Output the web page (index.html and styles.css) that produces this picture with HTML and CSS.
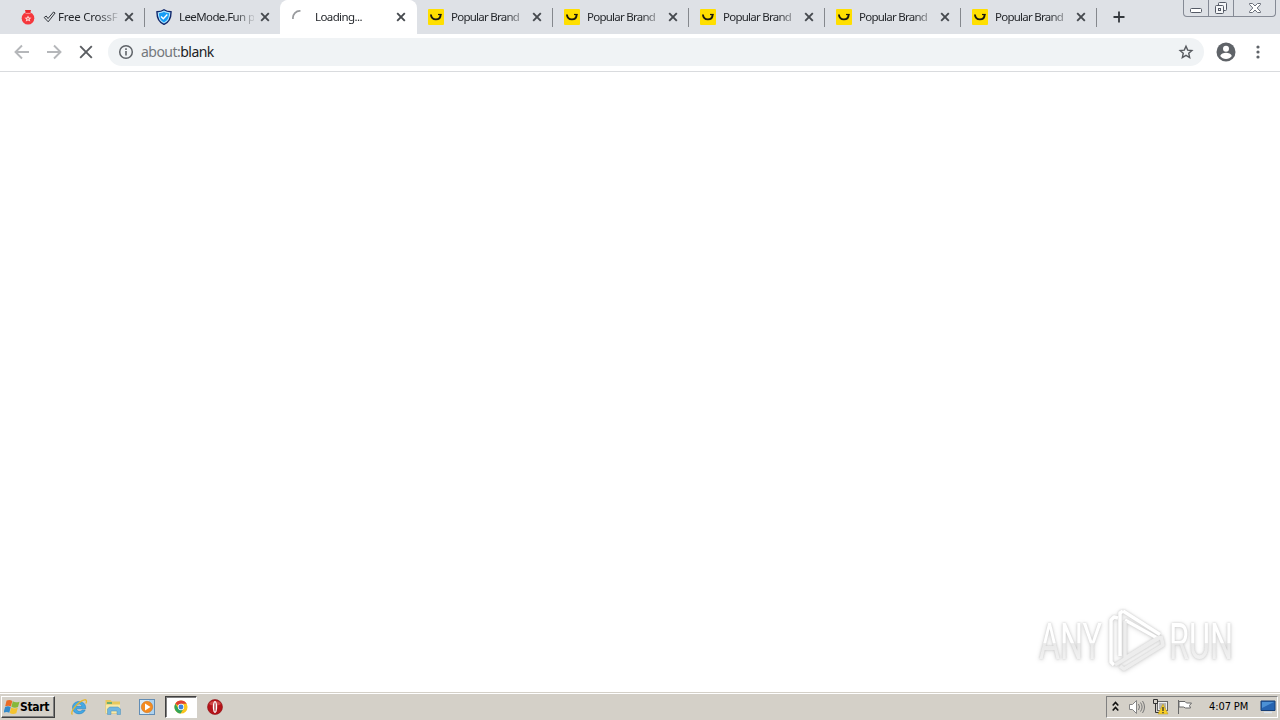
FILE: index.html
```
<!DOCTYPE html>
<html lang="en">
<head>
    <meta charset="UTF-8">
    <meta name="viewport" content="width=device-width, initial-scale=1.0">
    <title>about:blank</title>
    <link rel="stylesheet" href="styles.css">
</head>
<body>
    <!-- Shared icons -->
    <svg class="symbols" width="0" height="0">
        <symbol id="close" viewBox="0 0 10 10">
            <path d="M1.2 1.2l7.6 7.6M8.8 1.2L1.2 8.8" fill="none" stroke="#45494e" stroke-width="1.9"/>
        </symbol>
        <symbol id="smile" viewBox="0 0 16 16">
            <rect width="16" height="16" rx="1" fill="#ffdf00"/>
            <path d="M2.9 5.500c.3 3.200 2.300 4.900 5 4.900 2.800 0 4.700-1.900 4.700-5" fill="none" stroke="#1c1a10" stroke-width="1.900"/>
            <path d="M10 5.500h3.700" fill="none" stroke="#1c1a10" stroke-width="1.200"/>
        </symbol>
    </svg>

    <div class="browser">
        <div class="tab-strip">
            <div class="tab">
                <svg class="favicon" viewBox="0 0 16 16">
                    <path d="M5 1h6l-1 4H6z" fill="#e8282d"/>
                    <circle cx="8" cy="9.300" r="6.300" fill="#f5373c"/>
                    <path d="M5.500 4.500h5" stroke="#ff9a9a" stroke-width=".8"/>
                    <path d="M8 6.400l1.100 2.100 2.400.2-1.800 1.600.6 2.300L8 11.500l-2.300 1.100.6-2.300-1.800-1.600 2.400-.2z" fill="#ffd0cf"/>
                    <circle cx="8" cy="9.700" r=".8" fill="#f5373c"/>
                </svg>
                <span class="tab-title wide">
                    <svg class="check" viewBox="0 0 13 12"><path d="M1.200 6.500l2-1.500 1.800 2.500L10.500 1l1.600 1L5.200 10.800z" fill="none" stroke="#30343a" stroke-width="1"/></svg>
                    Free CrossF
                </span>
                <svg class="close"><use href="#close"/></svg>
            </div>
            <div class="tab">
                <svg class="favicon" viewBox="0 0 16 16">
                    <path d="M8 .7c2 1.400 4.300 2 7 2 .2 6-1.500 10.300-7 12.700C2.500 13 .8 8.700 1 2.700c2.700 0 5-.6 7-2z" fill="#a9e4ff" stroke="#11276b" stroke-width="1.400"/>
                    <path d="M8 2.800c1.600 1 3.200 1.400 5 1.500 0 4.200-1.300 7.300-5 9.100-3.700-1.800-5-4.900-5-9.100 1.800-.1 3.400-.5 5-1.500z" fill="#159cf5"/>
                    <path d="M5 7.600l2.300 2.200 4-4.200" fill="none" stroke="#fff" stroke-width="1.400"/>
                </svg>
                <span class="tab-title">LeeMode.Fun p</span>
                <svg class="close"><use href="#close"/></svg>
            </div>
            <div class="tab active">
                <svg class="favicon" viewBox="0 0 16 16"><path d="M1 10A7 7 0 0 1 8.500 2" fill="none" stroke="#989a9d" stroke-width="1.700"/></svg>
                <span class="tab-title">Loading...</span>
                <svg class="close"><use href="#close"/></svg>
            </div>
            <div class="tab">
                <svg class="favicon"><use href="#smile"/></svg>
                <span class="tab-title narrow">Popular Brand</span>
                <svg class="close"><use href="#close"/></svg>
            </div>
            <div class="tab">
                <svg class="favicon"><use href="#smile"/></svg>
                <span class="tab-title narrow">Popular Brand</span>
                <svg class="close"><use href="#close"/></svg>
            </div>
            <div class="tab">
                <svg class="favicon"><use href="#smile"/></svg>
                <span class="tab-title narrow">Popular Brand</span>
                <svg class="close"><use href="#close"/></svg>
            </div>
            <div class="tab">
                <svg class="favicon"><use href="#smile"/></svg>
                <span class="tab-title narrow">Popular Brand</span>
                <svg class="close"><use href="#close"/></svg>
            </div>
            <div class="tab">
                <svg class="favicon"><use href="#smile"/></svg>
                <span class="tab-title narrow">Popular Brand</span>
                <svg class="close"><use href="#close"/></svg>
            </div>
            <svg class="new-tab" viewBox="0 0 12 12"><path d="M6 .5v11M.5 6h11" stroke="#34383d" stroke-width="1.800"/></svg>
            <div class="window-buttons">
                <span class="min"><svg width="12" height="17"><rect x=".5" y="8.500" width="11" height="4" rx="1" fill="#fff" stroke="#555a66"/></svg></span>
                <span class="restore"><svg width="14" height="17" fill="#f5f6f8" stroke="#555a66"><rect x="4.500" y="2.500" width="8" height="8" rx="1"/><rect x="1.500" y="5.500" width="8" height="8" rx="1"/><rect x="4.500" y="8.500" width="2" height="2"/></svg></span>
                <span class="exit"><svg width="12" height="17"><path d="M.5 3.500h3L6 6l2.500-2.500h3v1L8.200 8l3.300 3.500v1h-3L6 10l-2.500 2.500h-3v-1L3.800 8 .5 4.500z" fill="#fff" stroke="#6a6f7a"/></svg></span>
            </div>
        </div>

        <div class="toolbar">
            <svg class="nav-icon" viewBox="0 0 16 16"><path d="M15 8H2M8 1.500L1.500 8 8 14.500" fill="none" stroke="#b5b7ba" stroke-width="1.900"/></svg>
            <svg class="nav-icon" viewBox="0 0 16 16"><path d="M1 8h13M8 1.500L14.500 8 8 14.500" fill="none" stroke="#b5b7ba" stroke-width="1.900"/></svg>
            <svg class="nav-icon" viewBox="0 0 16 16"><path d="M2.200 2.200l11.600 11.600M13.800 2.200L2.200 13.800" fill="none" stroke="#5a5d61" stroke-width="1.900"/></svg>
            <div class="address">
                <svg class="info" viewBox="0 0 16 16"><circle cx="8" cy="8" r="6.300" fill="none" stroke="#5f6368" stroke-width="1.500"/><path d="M8 7v4.500M8 4.300v1.700" stroke="#5f6368" stroke-width="1.600"/></svg>
                <span class="url"><span class="scheme">about:</span>blank</span>
                <svg class="star" viewBox="0 0 16 16"><path d="M8 2.300l1.700 3.850 4.200.4-3.150 2.800.9 4.150L8 11.350 4.350 13.500l.9-4.150L2.100 6.550l4.200-.4z" fill="none" stroke="#56595e" stroke-width="1.400"/></svg>
            </div>
            <svg class="profile" viewBox="0 0 20 20"><circle cx="10" cy="10" r="9.500" fill="#5f6368"/><circle cx="10" cy="6.800" r="3" fill="#fff"/><path d="M4.200 14c.6-2.200 3.500-3.200 5.800-3.200s5.200 1 5.800 3.200c-1.400 2-3.400 3-5.800 3s-4.400-1-5.800-3z" fill="#fff"/></svg>
            <svg class="menu" viewBox="0 0 4 16" fill="#5f6368"><circle cx="2" cy="3" r="1.600"/><circle cx="2" cy="8" r="1.600"/><circle cx="2" cy="13" r="1.600"/></svg>
        </div>

        <div class="page">
            <svg class="watermark" viewBox="0 0 220 76" width="220" height="76">
                <defs>
                    <linearGradient id="fade" x1="0" y1="20" x2="0" y2="60" gradientUnits="userSpaceOnUse">
                        <stop offset=".52" stop-color="#fff"/>
                        <stop offset=".54" stop-color="#e9e9e9"/>
                        <stop offset="1" stop-color="#f3f3f3"/>
                    </linearGradient>
                </defs>
                <text x="10" y="57" textLength="63" lengthAdjust="spacingAndGlyphs">ANY</text>
                <text x="140" y="57" textLength="64" lengthAdjust="spacingAndGlyphs">RUN</text>
                <g fill="none" stroke-width="3.500" stroke-linejoin="round">
                    <path d="M89 16l-4-1-3 3v42l3 3" stroke="#fff"/>
                    <path d="M94 9l37 23.500M94 9l-3 2v43M96 18l34 19" stroke="#fff"/>
                    <path d="M96 19v37l34-21M91 64l4 3 39-24-2-9M86 63l46-28" stroke="#ededed"/>
                </g>
            </svg>
        </div>
    </div>

    <div class="taskbar">
        <div class="start">
            <svg width="16" height="16" viewBox="0 0 16 16">
                <path d="M2.600 1.600c2.200-1 3.900-.8 5.700.3L6.900 7.500c-1.700-1-3.300-1-5.700-.2z" fill="#e96b26"/>
                <path d="M8.800 2.300c2 1.200 4 1.200 6.700.4l-1.500 5.400c-2.200.8-4.500.8-6.600-.3z" fill="#86b83b"/>
                <path d="M1.100 7.900c2.300-.8 4-.8 5.600.3l-1.400 5.600c-1.700-1.100-3.400-1.100-5.700-.2z" fill="#328acb"/>
                <path d="M7.200 8.600c2.200 1.100 4.200 1.100 6.600.2l-1.500 5.500c-2.400.9-4.600.8-6.600-.3z" fill="#f4c32f"/>
            </svg>
            <span>Start</span>
        </div>
        <div class="launchers">
            <span class="launcher">
                <svg width="18" height="18" viewBox="0 0 18 18">
                    <path d="M15.700 10.800H6.500c.3 2.800 4 3.400 5.700 1.200h3c-2.600 6-12.700 5-12.700-2.600 0-8 13.900-8.400 13.200 1.400zM6.500 8.300h5.300c-.3-3-4.800-3-5.300 0z" fill="#43a9e5" stroke="#277bb8" stroke-width=".5"/>
                    <path d="M2.500 16.500c-3.500-2 6-13.500 12-14.700 2.500-.4 2.300 1.800 1.300 3.700" fill="none" stroke="#e7b72d" stroke-width="1.300"/>
                </svg>
            </span>
            <span class="launcher">
                <svg width="18" height="18" viewBox="0 0 18 18">
                    <path d="M1.500 2h5l1.500 1.500h8v12H1.500z" fill="#e8c85c"/>
                    <path d="M3 4h5v2H3z" fill="#6eae6f"/>
                    <path d="M2 6.500h14V15H2z" fill="#f8e9a6"/>
                    <path d="M3.500 16.500V11l2-2H14l2.500 2v5.500h-3.500V13H7v3.500z" fill="#70b6df" stroke="#4c8eb9" stroke-width=".5"/>
                </svg>
            </span>
            <span class="launcher">
                <svg width="18" height="18" viewBox="0 0 18 18">
                    <rect x="1.500" y="1.500" width="15" height="15" fill="#add2ee" stroke="#628db5"/>
                    <path d="M2 2h9v14H2z" fill="#d7eaf8"/>
                    <circle cx="9" cy="9" r="5.700" fill="#f48b20" stroke="#c86a13" stroke-width=".5"/>
                    <path d="M7 5.500v7L12.500 9z" fill="#fff"/>
                </svg>
            </span>
            <span class="launcher pressed">
                <svg width="14" height="14" viewBox="0 0 16 16">
                    <circle cx="8" cy="8" r="7.500" fill="#fbc51d"/>
                    <path d="M8 8L1.500 4.200A7.500 7.500 0 0 1 14.500 4.300H8z" fill="#df4034"/>
                    <path d="M1.500 4.200A7.500 7.500 0 0 0 7.500 15.500L11 9.800H5z" fill="#32a45a"/>
                    <circle cx="8" cy="8" r="3.600" fill="#fff"/>
                    <circle cx="8" cy="8" r="2.800" fill="#3e82dc"/>
                </svg>
            </span>
            <span class="launcher">
                <svg width="18" height="18" viewBox="0 0 18 18">
                    <circle cx="9" cy="9" r="7.500" fill="#b51319" stroke="#8b1014" stroke-width=".6"/>
                    <path d="M3 6a6.500 5 0 0 1 12 0c-3 2-9 2-12 0z" fill="#e36a64" opacity=".6"/>
                    <ellipse cx="9" cy="9" rx="2.200" ry="6" fill="#fff"/>
                    <ellipse cx="9" cy="9" rx=".6" ry="4.700" fill="#9d1216"/>
                </svg>
            </span>
        </div>
        <div class="tray">
            <svg width="7" height="12" viewBox="0 0 7 12"><path d="M.7 4.500l2.800-3 2.800 3M.7 9.500l2.800-3 2.800 3" fill="none" stroke="#111" stroke-width="1.600"/></svg>
            <svg class="speaker" width="18" height="16" viewBox="0 0 18 16"><path d="M1.500 5.500h3l4-4v13l-4-4h-3z" fill="#fff" stroke="#858585"/><path d="M10.500 5q2 3 0 6M12.500 3.500q3.200 4.500 0 9M14.500 2q4 6 0 12" fill="none" stroke="#777"/></svg>
            <svg class="network" width="17" height="17" viewBox="0 0 17 17">
                <rect x="5.500" y="3.500" width="10" height="9" fill="#eee" stroke="#666"/>
                <path d="M7 5h7v6H7z" fill="#b5b5b5"/>
                <path d="M1.500 1.500h4v4h-4zM3.500 5.500v9h4" fill="none" stroke="#333"/>
                <path d="M11 6l5 10H6z" fill="#f9cf24" stroke="#b7961c" stroke-width=".5"/>
                <path d="M11 9v4M11 14v1.300" stroke="#333" stroke-width="1.300"/>
            </svg>
            <svg class="flag" width="17" height="16" viewBox="0 0 17 16"><path d="M2.500 1v14M3 2.500h6l1.500 1.500h5l-2 2.500 1 2.500h-5L7.500 8H3z" fill="#fff" stroke="#686868"/></svg>
            <span class="clock">4:07 PM</span>
            <svg class="desktop" width="16" height="14" viewBox="0 0 16 14"><path d="M1 1h14v9.500H1z" fill="#2664b1" stroke="#173e75"/><path d="M2 2h12L2 8z" fill="#4c91d5"/><path d="M4 12.500h8" stroke="#dae3ed" stroke-width="1.500"/></svg>
        </div>
    </div>
</body>
</html>
```
FILE: styles.css
```
* {
    box-sizing: border-box;
}
body {
    margin: 0;
    width: 1280px;
    height: 720px;
    display: flex;
    flex-direction: column;
    overflow: hidden;
    background: #fff;
    font-family: "DejaVu Sans Condensed", "DejaVu Sans", sans-serif;
    font-size: 11px;
}
svg {
    display: block;
    flex-shrink: 0;
}
.symbols {
    position: absolute;
}
.browser {
    flex: 1;
    display: flex;
    flex-direction: column;
}
.tab-strip {
    display: flex;
    height: 34px;
    padding-left: 8px;
    background: #dee1e6;
}
.tab {
    position: relative;
    display: flex;
    align-items: center;
    width: 136px;
    padding-left: 12px;
    color: #3c4043;
}
.tab::after {
    content: "";
    position: absolute;
    right: -1px;
    top: 8px;
    width: 1px;
    height: 19px;
    background: #85888d;
}
.tab:nth-child(2)::after, .tab.active::after {
    display: none;
}
.tab.active {
    background: #fff;
    border-radius: 8px 8px 0 0;
    box-shadow: 1px 0 #fff;
}
.favicon {
    width: 16px;
    height: 16px;
}
.tab-title {
    display: flex;
    width: 75px;
    margin-left: 7px;
    white-space: nowrap;
    font-family: "Noto Sans", sans-serif;
    font-size: 11.5px;
    line-height: 16px;
    letter-spacing: -0.6px;
    color: #25282c;
    -webkit-mask-image: linear-gradient(to right, #000 55px, transparent 78px);
    mask-image: linear-gradient(to right, #000 55px, transparent 78px);
}
.tab-title.wide {
    letter-spacing: -0.25px;
}
.tab-title.narrow {
    letter-spacing: -0.75px;
}
.check {
    width: 13px;
    height: 12px;
    margin: 2px 2px 0 0;
}
.close {
    width: 10px;
    height: 10px;
    margin-left: 6px;
}
.new-tab {
    width: 12px;
    height: 12px;
    margin: 11px 0 0 17px;
}
.window-buttons {
    display: flex;
    width: 93px;
    height: 17px;
    margin: 0 4px 0 auto;
    border: 1px solid #858a95;
    border-top: 0;
    border-radius: 0 0 4px 4px;
}
.window-buttons span {
    display: flex;
    justify-content: center;
    overflow: hidden;
}
.min, .restore {
    width: 25px;
    border-right: 1px solid #858a95;
}
.exit {
    flex: 1;
}
.toolbar {
    display: flex;
    align-items: center;
    height: 38px;
    padding: 0 19px 1px 14px;
    border-bottom: 1px solid #d9dbde;
}
.nav-icon {
    width: 16px;
    height: 16px;
    margin-right: 16px;
}
.address {
    display: flex;
    align-items: center;
    width: 1096px;
    height: 28px;
    margin-left: -2px;
    padding: 0 10px;
    border-radius: 14px;
    background: #f0f3f5;
}
.info, .star {
    width: 16px;
    height: 16px;
}
.url {
    margin-left: 7px;
    font-family: "Noto Sans", sans-serif;
    font-size: 14px;
    line-height: 20px;
    letter-spacing: -0.53px;
    color: #202124;
}
.scheme {
    color: #74787c;
}
.star {
    margin-left: auto;
}
.profile {
    width: 20px;
    height: 20px;
    margin-left: 12px;
}
.menu {
    width: 4px;
    height: 16px;
    margin-left: 20px;
}
.page {
    flex: 1;
    display: flex;
    justify-content: flex-end;
    align-items: flex-end;
    padding: 0 31px 14px 0;
}
.watermark {
    filter: drop-shadow(0 0 1px #c8c8c8) drop-shadow(0 1px 2px #e2e2e2);
}
.watermark text {
    font-family: Roboto, sans-serif;
    font-size: 50px;
    fill: url(#fade);
}
.taskbar {
    display: flex;
    align-items: center;
    height: 28px;
    padding: 0 2px 0 1px;
    border-top: 1px solid #d4d0c8;
    background: #d4d0c8;
    box-shadow: inset 0 1px #fff;
}
.start {
    display: flex;
    align-items: center;
    width: 54px;
    height: 22px;
    padding-left: 2px;
    border: 1px solid;
    border-color: #fff #404040 #404040 #fff;
    box-shadow: inset -1px -1px #808080;
    font-size: 12px;
    font-weight: bold;
    letter-spacing: -0.3px;
    color: #000;
}
.launchers {
    display: flex;
    margin-left: 7px;
}
.launcher {
    display: flex;
    justify-content: center;
    align-items: center;
    width: 34px;
    height: 22px;
}
.pressed {
    width: 32px;
    margin: 0 1px;
    border: 1px solid;
    border-color: #404040 #fff #fff #404040;
    box-shadow: inset 1px 1px #808080;
    background: #fff;
}
.tray {
    display: flex;
    align-items: center;
    width: 172px;
    height: 22px;
    margin-left: auto;
    padding-left: 5px;
    border: 1px solid;
    border-color: #808080 #fff #fff #808080;
    color: #000;
}
.speaker {
    margin-left: 9px;
}
.network {
    margin-left: 6px;
}
.flag {
    margin-left: 7px;
}
.clock {
    width: 42px;
    margin-left: 16px;
    white-space: nowrap;
    letter-spacing: -0.1px;
}
.desktop {
    margin-left: 9px;
}
```
